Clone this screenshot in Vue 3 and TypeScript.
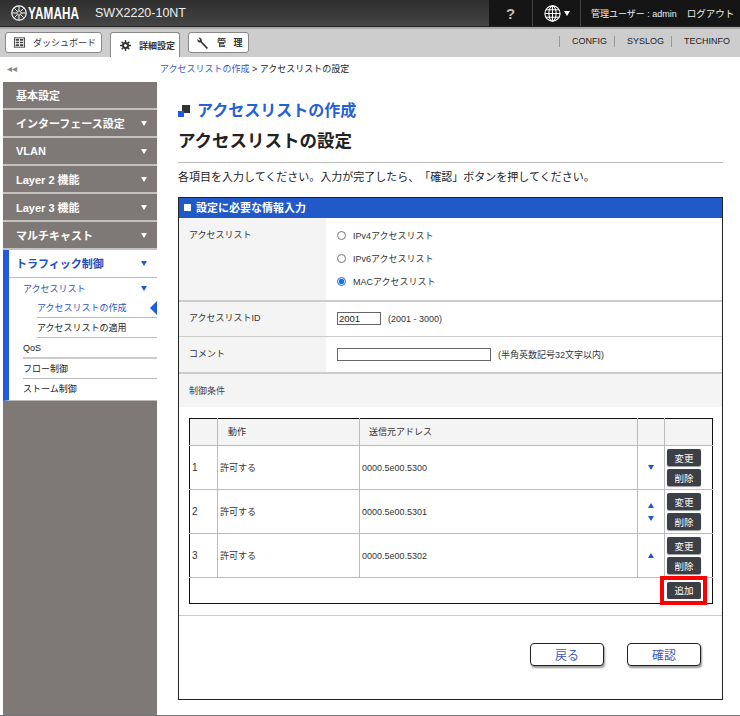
<script setup lang="ts">
const menu = ['基本設定', 'インターフェース設定', 'VLAN', 'Layer 2 機能', 'Layer 3 機能', 'マルチキャスト']
const rows = [
  { n: 1, addr: '0000.5e00.5300', up: false, down: true },
  { n: 2, addr: '0000.5e00.5301', up: true, down: true },
  { n: 3, addr: '0000.5e00.5302', up: true, down: false },
]
</script>

<template>
  <div class="page">
    <header class="top">
      <div class="brand">
        <svg class="emblem" width="16" height="16" viewBox="0 0 16 16">
          <circle cx="8" cy="8" r="7.2" fill="none" stroke="#fff" stroke-width="1.2" />
          <circle cx="8" cy="8" r="2" fill="none" stroke="#fff" stroke-width="0.8" />
          <path d="M8 1.5V6M8 10v4.5M1.5 8H6M10 8h4.5M3.4 3.4l3.2 3.2M9.4 9.4l3.2 3.2M12.6 3.4L9.4 6.6M6.6 9.4l-3.2 3.2" stroke="#fff" stroke-width="1" />
        </svg>
        <span class="logo">YAMAHA</span>
        <span class="model">SWX2220-10NT</span>
      </div>
      <div class="tools">
        <div class="help">?</div>
        <div class="lang">
          <svg width="17" height="17" viewBox="0 0 17 17" fill="none" stroke="#fff" stroke-width="1.1">
            <circle cx="8.5" cy="8.5" r="7.6" />
            <ellipse cx="8.5" cy="8.5" rx="3.6" ry="7.6" />
            <path d="M8.5 1v15M1 8.5h15M2 4.8h13M2 12.2h13" />
          </svg>
          <i class="caret"></i>
        </div>
        <div class="user">
          <span class="uname">管理ユーザー : admin</span>
          <span>ログアウト</span>
        </div>
      </div>
    </header>

    <nav class="tabs">
      <div class="tab-group">
        <div class="tab dash">
          <svg width="11" height="11" viewBox="0 0 13 12">
            <rect x="0.5" y="0.5" width="12" height="11" fill="#fff" stroke="#333" />
            <path d="M2 2h4v2H2zM7 2h4v2H7zM2 5h4v2H2zM7 5h4v2H7zM2 8h4v2H2zM7 8h4v2H7z" fill="#444" />
          </svg>
          <span>ダッシュボード</span>
        </div>
        <div class="tab active">
          <svg width="11" height="11" viewBox="0 0 13 13">
            <circle cx="6.5" cy="6.5" r="3" fill="none" stroke="#333" stroke-width="2.4" />
            <path d="M6.5 0v13M0 6.5h13M2 2l9 9M11 2l-9 9" stroke="#333" stroke-width="1.7" />
            <circle cx="6.5" cy="6.5" r="1.8" fill="#fff" />
          </svg>
          <span class="bold">詳細設定</span>
        </div>
        <div class="tab manage">
          <svg width="12" height="12" viewBox="0 0 13 13">
            <path d="M12 12L5 4.6A3 3 0 0 0 1.5.7L3.4 3 2.6 4 .6 2.2A3 3 0 0 0 4 6l6.6 7z" fill="#333" />
          </svg>
          <span class="bold spaced">管 理</span>
        </div>
      </div>
      <div class="links">
        <span>CONFIG</span>
        <span>SYSLOG</span>
        <span>TECHINFO</span>
      </div>
    </nav>

    <div class="body">
      <aside class="side">
        <div class="collapse">◂◂</div>
        <div class="side-menu">
          <div v-for="(m, i) in menu" :key="m" class="m-item">
            <span>{{ m }}</span>
            <i v-if="i > 0" class="tri-w"></i>
          </div>
          <div class="m-open">
            <div class="m-head">
              <span>トラフィック制御</span>
              <i class="tri-b"></i>
            </div>
            <div class="sub">
              <div class="sub-title"><span>アクセスリスト</span><i class="tri-b"></i></div>
              <div class="sub2 cur">アクセスリストの作成<i class="pointer"></i></div>
              <div class="sub2">アクセスリストの適用</div>
              <div class="sub1 first">QoS</div>
              <div class="sub1">フロー制御</div>
              <div class="sub1">ストーム制御</div>
            </div>
          </div>
        </div>
      </aside>

      <main class="main">
        <div class="crumb"><span class="link">アクセスリストの作成</span> &gt; アクセスリストの設定</div>
        <div class="h1">
          <i class="h1-icon"><b></b><u></u></i>
          <span>アクセスリストの作成</span>
        </div>
        <h2>アクセスリストの設定</h2>
        <p class="lead">各項目を入力してください。入力が完了したら、「確認」ボタンを押してください。</p>

        <section class="panel">
          <div class="panel-head"><i></i>設定に必要な情報入力</div>

          <div class="row list">
            <div class="lbl">アクセスリスト</div>
            <div class="val radios">
              <label><i class="radio"></i>IPv4アクセスリスト</label>
              <label><i class="radio"></i>IPv6アクセスリスト</label>
              <label><i class="radio on"></i>MACアクセスリスト</label>
            </div>
          </div>
          <div class="row rid">
            <div class="lbl">アクセスリストID</div>
            <div class="val"><span class="input short">2001</span><span class="hint">(2001 - 3000)</span></div>
          </div>
          <div class="row rcm">
            <div class="lbl">コメント</div>
            <div class="val"><span class="input long"></span><span class="hint">(半角英数記号32文字以内)</span></div>
          </div>
          <div class="cond">制御条件</div>

          <div class="table-wrap">
            <table>
              <colgroup>
                <col class="c1" /><col class="c2" /><col class="c3" /><col class="c4" /><col class="c5" />
              </colgroup>
              <thead>
                <tr>
                  <th></th>
                  <th>動作</th>
                  <th>送信元アドレス</th>
                  <th></th>
                  <th></th>
                </tr>
              </thead>
              <tbody>
                <tr v-for="r in rows" :key="r.n" class="data">
                  <td class="num">{{ r.n }}</td>
                  <td>許可する</td>
                  <td>{{ r.addr }}</td>
                  <td class="arrows">
                    <i v-if="r.up" class="tri-up"></i>
                    <i v-if="r.down" class="tri-b"></i>
                  </td>
                  <td class="acts">
                    <span class="dbtn">変更</span>
                    <span class="dbtn">削除</span>
                  </td>
                </tr>
                <tr class="foot">
                  <td colspan="5">
                    <span class="add-wrap">
                      <span class="dbtn">追加</span>
                      <i class="mark"></i>
                    </span>
                  </td>
                </tr>
              </tbody>
            </table>
          </div>

          <div class="actions">
            <span class="lbtn">戻る</span>
            <span class="lbtn">確認</span>
          </div>
        </section>
      </main>
    </div>
  </div>
</template>

<style>
html, body { margin: 0; padding: 0; background: #fff; }
</style>

<style scoped>
* { box-sizing: border-box; }
i { display: block; font-style: normal; }
.page {
  width: 740px; height: 716px; overflow: hidden;
  display: flex; flex-direction: column;
  border-bottom: 1px solid #777;
  font-family: "Liberation Sans", "Noto Sans CJK JP", sans-serif;
  font-size: 9px; color: #222;
  text-spacing-trim: space-all;
}
.top {
  height: 27px; flex: none;
  display: flex; justify-content: space-between;
  background: linear-gradient(#2e2e2e, #454545);
  color: #fff;
  border-bottom: 1px solid #222;
}
.brand { display: flex; align-items: center; padding-left: 11px; }
.emblem { margin-right: 1px; }
.logo { font-weight: 700; font-size: 16.5px; width: 52px; display: inline-block; transform: scaleX(.71); transform-origin: 0 50%; letter-spacing: .2px; white-space: nowrap; }
.model { font-size: 12.5px; margin-left: 15px; color: #eee; }
.tools { display: flex; width: 251px; background: #151515; }
.help { width: 44px; font-size: 15px; font-weight: 700; color: #bbb; display: flex; align-items: center; justify-content: center; border-right: 1px solid #444; }
.lang { width: 48px; display: flex; align-items: center; justify-content: center; gap: 3px; border-right: 1px solid #444; }
.caret { width: 0; height: 0; border: 3.5px solid transparent; border-top: 5px solid #fff; border-bottom: 0; }
.user { flex: 1; display: flex; align-items: center; gap: 10px; padding-left: 10px; font-size: 9.5px; white-space: nowrap; color: #eee; }
.uname { font-size: 9px; }
.tabs {
  height: 30px; flex: none;
  display: flex; justify-content: space-between;
  background: #cdcdcd; border-top: 2px solid #a8a8a8;
}
.tab-group { display: flex; align-items: flex-end; padding-left: 5px; gap: 8px; }
.tab {
  height: 21px; margin-bottom: 4px; background: #fff;
  border: 1px solid #888; border-radius: 3px;
  display: flex; align-items: center; font-size: 9px; color: #333; white-space: nowrap;
}
.tab.dash { width: 97px; padding-left: 8px; gap: 8px; }
.tab.active { width: 70px; height: 25px; margin: 0; border-bottom: 0; border-radius: 3px 3px 0 0; padding-left: 9px; gap: 8px; box-shadow: inset 0 0 0 1px #fff; }
.tab.manage { width: 61px; padding-left: 8px; gap: 8px; }
.bold { font-weight: 700; font-size: 9px; }
.spaced { word-spacing: 5px; }
.links { display: flex; align-items: center; height: 24px; padding-right: 10px; font-size: 9px; color: #222; }
.links span { border-left: 1px solid #999; padding: 0 0 0 12px; margin-left: 7px; line-height: 11px; }
.body { flex: 1; display: flex; min-height: 0; }
.side { width: 158px; flex: none; display: flex; flex-direction: column; padding: 0 1px 0 3px; }
.collapse { height: 25px; line-height: 24px; font-size: 10px; color: #888; padding-left: 4px; letter-spacing: 0; }
.side-menu { flex: 1; background: #7e7977; display: flex; flex-direction: column; }
.m-item {
  height: 28px; padding: 0 10px 0 13px;
  display: flex; align-items: center; justify-content: space-between;
  color: #fff; font-weight: 700; font-size: 11px;
  border-bottom: 2px solid #c4c2c0;
  background: #7e7977;
}
.tri-w { width: 0; height: 0; border: 3px solid transparent; border-top: 5px solid #fff; border-bottom: 0; }
.tri-b { width: 0; height: 0; border: 3.5px solid transparent; border-top: 5px solid #1c57d6; border-bottom: 0; }
.tri-up { width: 0; height: 0; border: 3.5px solid transparent; border-bottom: 5px solid #1c57d6; border-top: 0; }
.m-open { background: #fff; border-left: 6px solid #1f5ae0; border-bottom: 1px solid #bbb; }
.m-head {
  height: 28px; padding: 0 10px 1px 7px;
  display: flex; align-items: center; justify-content: space-between;
  font-size: 11px; font-weight: 700; color: #1c4fc0;
  border-bottom: 1px solid #bbb;
}
.sub { padding: 0 0 0 14px; font-size: 9px; }
.sub-title { height: 20px; display: flex; align-items: center; justify-content: space-between; padding: 0 10px 0 0; color: #2d55c0; }
.sub2 { height: 20px; margin-left: 14px; line-height: 20px; border-bottom: 1px solid #bbb; position: relative; white-space: nowrap; }
.sub2.cur { color: #2d55c0; }
.pointer { position: absolute; right: 0; top: 3px; width: 0; height: 0; border: 7px solid transparent; border-right: 7px solid #1f5ae0; border-left: 0; }
.sub1 { height: 20.5px; line-height: 20px; border-bottom: 1px solid #bbb; }
.sub1.first { border-bottom-width: 2px; border-bottom-color: #ccc; }
.sub1:last-child { border-bottom: 0; }
.main { flex: 1; min-width: 0; padding: 0 17px 0 20px; }
.crumb { height: 25px; line-height: 24px; font-size: 9px; margin-left: -18px; color: #222; }
.link { color: #3a55c8; }
.h1 { display: flex; align-items: center; height: 18px; margin-top: 18px; gap: 7px; color: #2460d8; font-size: 16px; font-weight: 700; white-space: nowrap; }
.h1-icon { position: relative; width: 12px; height: 12px; margin-top: 4px; }
.h1-icon b { position: absolute; right: 0; top: 0; width: 8px; height: 8px; background: #333; }
.h1-icon u { position: absolute; left: 0; bottom: 0; width: 6px; height: 6px; background: #1f5ae0; }
h2 { margin: 11px 0 0; height: 23px; line-height: 24px; font-size: 17.5px; font-weight: 700; color: #222; border: 0; }
.lead { margin: 10px 0 0; height: 35px; padding-top: 6px; border-top: 1px solid #bbb; font-size: 11px; line-height: 16px; color: #222; white-space: nowrap; }
.panel { width: 545px; height: 503px; border: 1px solid #222; font-size: 9px; }
.panel-head { height: 20px; background: #2159c9; color: #fff; font-weight: 700; font-size: 11px; display: flex; align-items: center; padding: 0 0 2px 5px; gap: 5px; }
.panel-head i { width: 7px; height: 7px; background: #fff; }
.row { display: flex; border-bottom: 2px solid #ccc; }
.lbl { width: 147px; background: #f4f4f4; padding: 9px 0 0 10px; color: #333; font-size: 9px; }
.val { flex: 1; padding: 0 0 1px 11px; display: flex; align-items: center; }
.list { height: 84px; }
.list .lbl { padding-top: 10px; }
.radios { flex-direction: column; align-items: flex-start; gap: 0; padding-top: 6px; }
.radios label { height: 23px; display: flex; align-items: center; gap: 7px; font-size: 9px; color: #333; }
.radio { width: 9px; height: 9px; border: 1px solid #777; border-radius: 50%; background: #fff; }
.radio.on { border-color: #1a73e8; background: radial-gradient(circle, #1a73e8 0 2.6px, #fff 3.1px); }
.rid { height: 35px; border-bottom-width: 1px; }
.rcm { height: 37px; }
.rcm .lbl { padding-top: 10px; }
.input { display: inline-block; height: 13px; border: 1px solid #666; background: #fff; font-size: 9.5px; line-height: 12px; padding-left: 1px; color: #222; }
.short { width: 44px; }
.long { width: 154px; }
.hint { margin-left: 7px; font-size: 9px; color: #333; }
.cond { height: 33px; background: #f4f4f4; padding: 10px 0 0 10px; font-size: 9px; color: #444; }
.table-wrap { padding: 11px 10px 11px; border-bottom: 1px solid #ccc; }
table { width: 523px; border-collapse: collapse; table-layout: fixed; border: 1px solid #111; font-size: 9px; color: #333; }
.c1 { width: 28px; } .c2 { width: 142px; } .c3 { width: 278px; } .c4 { width: 27px; } .c5 { width: 48px; }
th { height: 27px; background: #f4f4f4; font-weight: 400; font-size: 9px; text-align: left; padding: 0 0 2px 10px; border: 1px solid #bbb; }
th:nth-child(3) { padding-left: 9px; }
td { padding: 0 0 0 2px; border: 1px solid #bbb; }
td.num { font-size: 10px; }
th:first-child, td:first-child { border-left: 1px solid #111; }
th:last-child, td:last-child { border-right: 1px solid #111; }
thead th { border-top: 1px solid #111; }
.data { height: 44px; }
.arrows { padding: 0; }
.arrows i { margin: 0 auto; }
.arrows i + i { margin-top: 8px; }
.acts { padding: 0 0 0 2px; }
.acts .dbtn { display: flex; }
.acts .dbtn + .dbtn { margin-top: 3px; }
.dbtn {
  width: 34px; height: 17px; background: #3d3f47; color: #fff; border-radius: 2px;
  font-size: 9.5px; display: inline-flex; align-items: center; justify-content: center;
  box-shadow: 0 1px 1px #999;
}
.foot { height: 26px; }
.foot td { padding: 0 11px 0 0; text-align: right; border-bottom: 1px solid #111; border-right: 1px solid #111; line-height: 0; vertical-align: middle; }
.foot .dbtn { line-height: 1; }
.add-wrap { position: relative; display: inline-block; }
.mark { position: absolute; left: -7px; right: -6px; top: -6px; bottom: -6px; border: 4px solid #f00; box-shadow: inset 0 0 0 2px #fff; }
.actions { display: flex; justify-content: flex-end; gap: 23px; padding: 27px 21px 0 0; }
.lbtn {
  width: 74px; height: 23px; border: 1px solid #222; border-radius: 4px; background: #fff;
  box-shadow: 1px 2px 2px #999; color: #3a5ab8; font-size: 12px;
  display: flex; align-items: center; justify-content: center;
}
</style>
